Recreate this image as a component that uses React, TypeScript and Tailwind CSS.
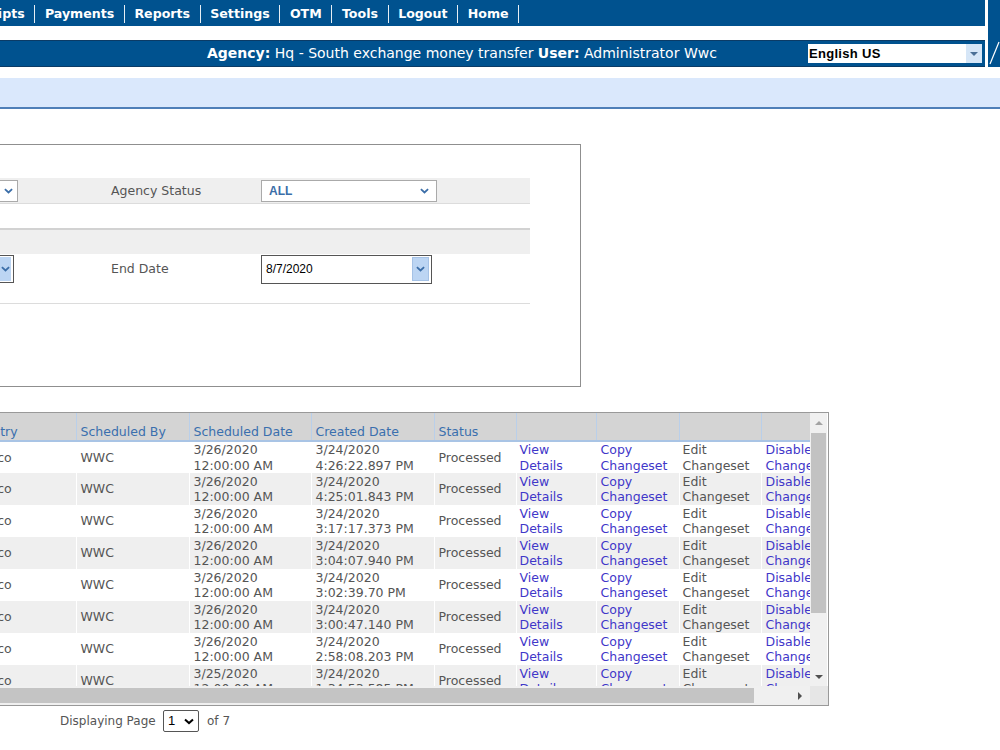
import React from "react";

const navItems = ["Receipts", "Payments", "Reports", "Settings", "OTM", "Tools", "Logout", "Home"];

const created = [
  "4:26:22.897 PM",
  "4:25:01.843 PM",
  "3:17:17.373 PM",
  "3:04:07.940 PM",
  "3:02:39.70 PM",
  "3:00:47.140 PM",
  "2:58:08.203 PM",
  "1:34:53.585 PM",
];

const Chevron = ({ className = "" }: { className?: string }) => (
  <svg viewBox="0 0 10 6" className={className} fill="none">
    <path d="M1 1l4 3.6L9 1" stroke="currentColor" strokeWidth="2" />
  </svg>
);

function NavBar() {
  return (
    <div className="h-[26px] bg-[#00528f] flex items-center overflow-hidden">
      <div className="flex items-center -ml-[46px] mt-[3px] text-white font-bold text-[12.6px] whitespace-nowrap">
        {navItems.map((n) => (
          <div key={n} className="flex items-center">
            <span className="px-[9.6px]">{n}</span>
            <span className="w-px h-[18px] bg-white/90" />
          </div>
        ))}
      </div>
    </div>
  );
}

function AgencyBar() {
  return (
    <div className="h-[27px] bg-[#00528f] border-y border-[#0b3b66] flex items-center text-white text-[14px] whitespace-nowrap">
      <div className="ml-[207px] w-[601px]">
        <span className="font-bold">Agency:</span> Hq - South exchange money transfer{" "}
        <span className="font-bold">User:</span> Administrator Wwc
      </div>
      <div className="w-[174px] h-[19px] bg-white flex items-center justify-between">
        <span className="pl-[1px] text-black font-bold text-[13px] font-['Liberation_Sans',sans-serif] tracking-[0.3px]">English US</span>
        <span className="w-[16px] h-full bg-[#d6e6f7] flex items-center justify-center">
          <span className="w-0 h-0 border-x-[4px] border-x-transparent border-t-[4px] border-t-[#4a6f96]" />
        </span>
      </div>
    </div>
  );
}

function ClippedSelect({ h, tall }: { h: number; tall?: boolean }) {
  return (
    <div
      className={`bg-white border border-l-0 ${tall ? "border-[#555] w-[14px]" : "border-[#aaa] w-[18px]"} flex items-center justify-end pr-[2px]`}
      style={{ height: h }}
    >
      {tall ? (
        <span className="w-[12px] h-[24px] bg-[#bcd5f3] flex items-center justify-center text-[#3b6ea8]">
          <Chevron className="w-[9px] h-[6px]" />
        </span>
      ) : (
        <Chevron className="w-[9px] h-[6px] text-[#3b6ea8] mr-[2px]" />
      )}
    </div>
  );
}

function FilterBox() {
  return (
    <div className="mt-[35px] w-[581px] h-[243px] border border-l-0 border-[#8f8f8f] pt-[33px] font-['DejaVu_Sans',sans-serif] text-[12.5px] text-[#555]">
      <div className="w-[530px]">
        <div className="h-[26px] bg-[#efefef] border-b border-[#dcdcdc] flex items-center">
          <ClippedSelect h={22} />
          <span className="ml-[93px] w-[150px] pt-[1px]">Agency Status</span>
          <div className="w-[176px] h-[22px] bg-white border border-[#aaa] flex items-center justify-between px-[7px]">
            <span className="text-[#3b6ea8] text-[12px] font-['Liberation_Sans',sans-serif] font-semibold">ALL</span>
            <Chevron className="w-[9px] h-[6px] text-[#3b6ea8]" />
          </div>
        </div>
        <div className="h-[24px]" />
        <div className="h-[26px] bg-[#efefef] border-t-2 border-[#d2d2d2]" />
        <div className="h-[50px] border-b border-[#dcdcdc] pt-[1px]">
          <div className="flex items-center h-[28px]">
            <ClippedSelect h={28} tall />
            <span className="ml-[97px] w-[150px] pt-[1px]">End Date</span>
            <div className="w-[171px] h-[29px] bg-white border border-[#555] flex items-center justify-between pl-[4px] pr-[2px]">
              <span className="text-black text-[12px] font-['Liberation_Sans',sans-serif]">8/7/2020</span>
              <span className="w-[17px] h-[24px] bg-[#bcd5f3] border border-[#a5c2e6] flex items-center justify-center text-[#3b6ea8]">
                <Chevron className="w-[9px] h-[6px]" />
              </span>
            </div>
          </div>
        </div>
      </div>
    </div>
  );
}

const widths = [112, 113, 122, 123, 82, 80, 83, 82, 90];
const headers = ["Country", "Scheduled By", "Scheduled Date", "Created Date", "Status", "", "", "", ""];

function Grid() {
  return (
    <div className="mt-[25px] w-[829px] h-[294px] border border-l-0 border-[#999] flex flex-col font-['DejaVu_Sans',sans-serif] text-[12.5px]">
      <div className="flex h-[273px]">
        <div className="w-[810px] overflow-hidden">
          <table className="table-fixed border-collapse -ml-[36px]" style={{ width: 887 }}>
            <colgroup>
              {widths.map((w, i) => (
                <col key={i} style={{ width: w }} />
              ))}
            </colgroup>
            <thead>
              <tr className="h-[28px] bg-[#d4d4d4] border-b-2 border-[#a9c4e5]">
                {headers.map((h, i) => (
                  <th
                    key={i}
                    className="text-left font-normal text-[#3a6fae] align-bottom leading-[14px] pl-[4px] pb-[1px] border-r border-[#b9cfea] whitespace-nowrap"
                  >
                    {h}
                  </th>
                ))}
              </tr>
            </thead>
            <tbody className="text-[#555] leading-[15.5px]">
              {created.map((c, i) => (
                <tr key={i} className={`h-[32px] ${i % 2 ? "bg-[#efefef]" : "bg-white"}`}>
                  <td className="pl-[4px] border-r border-white">Mexico</td>
                  <td className="pl-[4px] border-r border-white">WWC</td>
                  <td className="pl-[4px] border-r border-white">
                    {i === 7 ? "3/25/2020" : "3/26/2020"}
                    <br />
                    12:00:00 AM
                  </td>
                  <td className="pl-[4px] border-r border-white">
                    3/24/2020
                    <br />
                    {c}
                  </td>
                  <td className="pl-[4px] border-r border-white">Processed</td>
                  <td className="pl-[3px] border-r border-white text-[#3f37c9]">
                    View
                    <br />
                    Details
                  </td>
                  <td className="pl-[4px] border-r border-white text-[#3f37c9]">
                    Copy
                    <br />
                    Changeset
                  </td>
                  <td className="pl-[3px] border-r border-white">
                    Edit
                    <br />
                    Changeset
                  </td>
                  <td className="pl-[4px] text-[#3f37c9] whitespace-nowrap">
                    Disable
                    <br />
                    Changeset
                  </td>
                </tr>
              ))}
            </tbody>
          </table>
        </div>
        {/* vertical scrollbar */}
        <div className="w-[17px] bg-[#f0f0f0] flex flex-col items-center">
          <div className="h-[20px] flex items-center justify-center">
            <span className="w-0 h-0 border-x-[4px] border-x-transparent border-b-[4px] border-b-[#a3a3a3]" />
          </div>
          <div className="w-[15px] h-[180px] bg-[#c2c2c2]" />
          <div className="flex-1" />
          <div className="h-[18px] flex items-center justify-center">
            <span className="w-0 h-0 border-x-[4px] border-x-transparent border-t-[4px] border-t-[#505050]" />
          </div>
        </div>
      </div>
      {/* horizontal scrollbar */}
      <div className="flex-1 flex bg-[#f0f0f0]">
        <div className="w-[810px] flex items-center">
          <div className="w-[754px] h-[15px] bg-[#c4c4c4]" />
          <div className="flex-1 flex items-center justify-end pr-[8px]">
            <span className="w-0 h-0 border-y-[4px] border-y-transparent border-l-[4px] border-l-[#505050]" />
          </div>
        </div>
        <div className="flex-1 bg-[#e6e6e6]" />
      </div>
    </div>
  );
}

function Pager() {
  return (
    <div className="mt-[4px] flex items-center h-[22px] font-['DejaVu_Sans',sans-serif] text-[12px] text-[#555]">
      <span className="ml-[60px] w-[103px]">Displaying Page</span>
      <div className="w-[36px] h-[22px] border border-[#555] rounded-[2px] flex items-center justify-between px-[4px] text-black">
        <span className="font-['Liberation_Sans',sans-serif] text-[13px]">1</span>
        <Chevron className="w-[10px] h-[7px] text-black" />
      </div>
      <span className="ml-[8px]">of 7</span>
    </div>
  );
}

export default function App() {
  return (
    <div className="w-[1000px] h-[750px] overflow-hidden bg-white font-['DejaVu_Sans',sans-serif]">
      <div className="flex">
        <div className="w-[985px]">
          <NavBar />
          <div className="h-[14px]" />
          <AgencyBar />
        </div>
        <div className="ml-[3px] w-[12px] h-[67px] bg-[#00528f] overflow-hidden">
          <svg viewBox="0 0 12 67" className="w-full h-full">
            <path d="M2 64L11 42" stroke="white" strokeWidth="1.2" />
          </svg>
        </div>
      </div>
      <div className="mt-[11px] h-[31px] bg-[#dae8fc] border-b-2 border-[#4f7fb8]" />
      <FilterBox />
      <Grid />
      <Pager />
    </div>
  );
}
